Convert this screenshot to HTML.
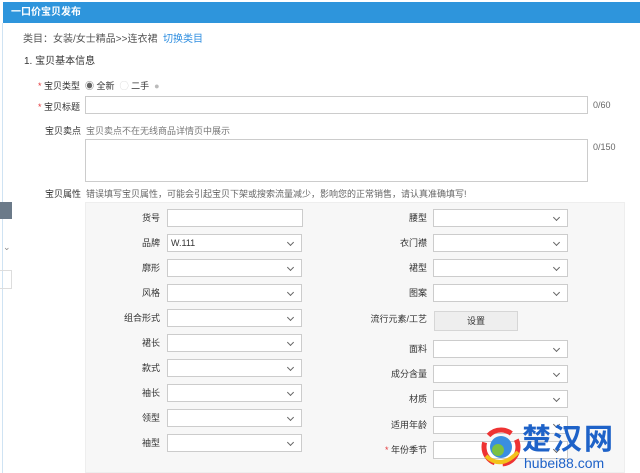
<!DOCTYPE html>
<html><head><meta charset="utf-8"><style>
*{margin:0;padding:0;box-sizing:border-box}
body{width:640px;height:473px;overflow:hidden;background:#fff;position:relative;font-family:"Liberation Sans","Noto Sans CJK SC",sans-serif;font-size:9px;color:#333}
.a{position:absolute;white-space:nowrap}
.bar{left:3px;top:2px;width:637px;height:21px;background:#2e95dc;color:#fff;font-weight:bold;font-size:10px;line-height:21px;padding-left:8px}
.lb{position:absolute;left:2px;top:23px;width:1px;height:450px;background:#cfe3f3}
.inp{position:absolute;background:#fff;border:1px solid #ccc;height:18px}
.sel{position:absolute;background:#fff;border:1px solid #ccc;height:18px;width:135px}
.sel:after{content:"";position:absolute;right:8px;top:5px;width:4px;height:4px;border-right:1px solid #666;border-bottom:1px solid #666;transform:rotate(45deg)}
.l{position:absolute;text-align:right;width:80px;line-height:18px}
.r{color:#e4393c}
</style></head><body>
<div class="a bar">一口价宝贝发布</div>
<div class="lb"></div>
<div class="a" style="left:0;top:202px;width:12px;height:17px;background:#6b7a89"></div>
<div class="a" style="left:3px;top:242px;color:#888">⌄</div>
<div class="a" style="left:0;top:270px;width:12px;height:19px;border:1px solid #ddd;border-left:none"></div>
<div class="a" style="left:23px;top:30px;font-size:10px;color:#555">类目：女装/女士精品&gt;&gt;连衣裙 &nbsp;<span style="color:#2e8ee0">切换类目</span></div>
<div class="a" style="left:24px;top:52px;font-size:10px">1. 宝贝基本信息</div>
<div class="a" style="left:38px;top:79px"><span class="r">*</span> 宝贝类型 &nbsp;<span style="color:#666">◉</span> 全新 &nbsp;<span style="color:#ccc">◯</span> 二手 &nbsp;<span style="color:#bbb">●</span></div>
<div class="a" style="left:38px;top:100px"><span class="r">*</span> 宝贝标题</div>
<div class="inp" style="left:85px;top:96px;width:503px"></div>
<div class="a" style="left:593px;top:100px;color:#666">0/60</div>
<div class="a" style="left:45px;top:124px">宝贝卖点 &nbsp;<span style="color:#777">宝贝卖点不在无线商品详情页中展示</span></div>
<div class="inp" style="left:85px;top:139px;width:503px;height:43px"></div>
<div class="a" style="left:593px;top:142px;color:#666">0/150</div>
<div class="a" style="left:45px;top:187px">宝贝属性 &nbsp;<span style="color:#666">错误填写宝贝属性，可能会引起宝贝下架或搜索流量减少，影响您的正常销售，请认真准确填写!</span></div>
<div class="a" style="left:85px;top:202px;width:540px;height:271px;background:#f7f7f7;border:1px solid #eee"></div>

<div class="l" style="left:80px;top:209px">货号</div><div class="inp" style="left:167px;top:209px;width:136px"></div>
<div class="l" style="left:80px;top:234px">品牌</div><div class="sel" style="left:167px;top:234px"><span style="position:absolute;left:3px;top:3px">W.111</span></div>
<div class="l" style="left:80px;top:259px">廓形</div><div class="sel" style="left:167px;top:259px"></div>
<div class="l" style="left:80px;top:284px">风格</div><div class="sel" style="left:167px;top:284px"></div>
<div class="l" style="left:80px;top:309px">组合形式</div><div class="sel" style="left:167px;top:309px"></div>
<div class="l" style="left:80px;top:334px">裙长</div><div class="sel" style="left:167px;top:334px"></div>
<div class="l" style="left:80px;top:359px">款式</div><div class="sel" style="left:167px;top:359px"></div>
<div class="l" style="left:80px;top:384px">袖长</div><div class="sel" style="left:167px;top:384px"></div>
<div class="l" style="left:80px;top:409px">领型</div><div class="sel" style="left:167px;top:409px"></div>
<div class="l" style="left:80px;top:434px">袖型</div><div class="sel" style="left:167px;top:434px"></div>

<div class="l" style="left:347px;top:209px">腰型</div><div class="sel" style="left:433px;top:209px"></div>
<div class="l" style="left:347px;top:234px">衣门襟</div><div class="sel" style="left:433px;top:234px"></div>
<div class="l" style="left:347px;top:259px">裙型</div><div class="sel" style="left:433px;top:259px"></div>
<div class="l" style="left:347px;top:284px">图案</div><div class="sel" style="left:433px;top:284px"></div>
<div class="l" style="left:347px;top:310px">流行元素/工艺</div><div class="a" style="left:434px;top:311px;width:84px;height:20px;background:#eee;border:1px solid #d6d6d6;text-align:center;line-height:18px">设置</div>
<div class="l" style="left:347px;top:340px">面料</div><div class="sel" style="left:433px;top:340px"></div>
<div class="l" style="left:347px;top:365px">成分含量</div><div class="sel" style="left:433px;top:365px"></div>
<div class="l" style="left:347px;top:390px">材质</div><div class="sel" style="left:433px;top:390px"></div>
<div class="l" style="left:347px;top:416px">适用年龄</div><div class="sel" style="left:433px;top:416px"></div>
<div class="l" style="left:347px;top:441px"><span class="r">*</span> 年份季节</div><div class="sel" style="left:433px;top:441px"></div>

<svg class="a" style="left:480px;top:426px" width="42" height="42" viewBox="0 0 42 42"><circle cx="21" cy="21" r="17" fill="none" stroke="#e33" stroke-width="5" stroke-dasharray="25 8"/><circle cx="21" cy="21" r="11" fill="#3a8ee0"/><circle cx="18" cy="24" r="6" fill="#7cc142"/><path d="M6 30 Q21 44 38 26" stroke="#f3c21b" stroke-width="4" fill="none"/></svg>
<div class="a" style="left:522px;top:425px;font-size:29px;font-weight:bold;color:#1e62c8;letter-spacing:2px;line-height:30px">楚汉网</div>
<div class="a" style="left:524px;top:455px;font-size:14px;color:#1e62c8;line-height:16px">hubei88.com</div>
</body></html>
